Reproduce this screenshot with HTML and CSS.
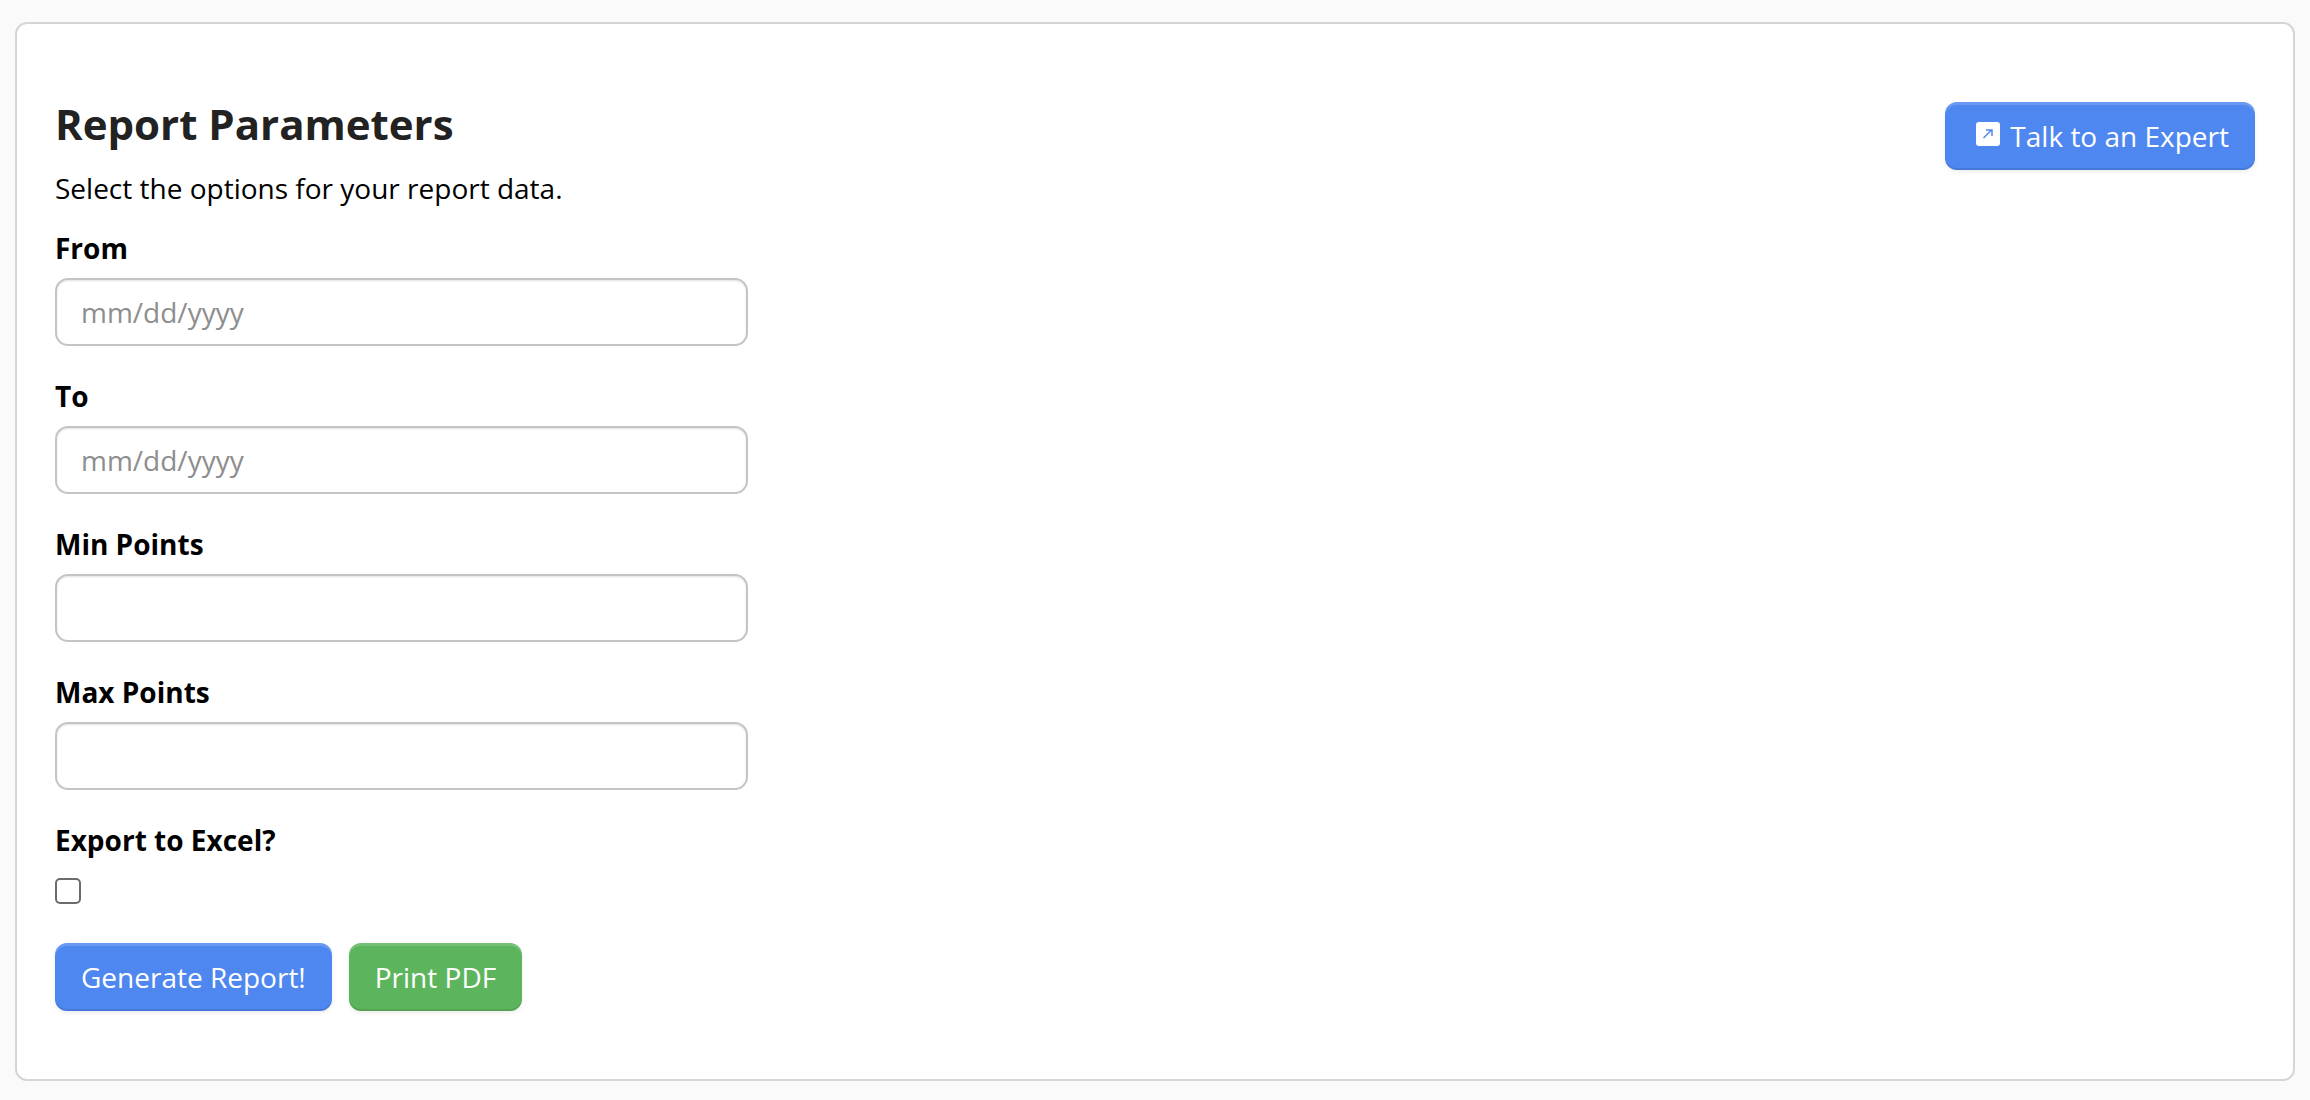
FILE: index.html
```html
<!DOCTYPE html>
<html lang="en">
<head>
  <meta charset="UTF-8">
  <title>Report Parameters</title>
  <link rel="stylesheet" href="styles.css">
</head>
<body>
  <div class="card">
    <div class="card-header">
      <div>
        <h2>Report Parameters</h2>
        <p class="hint">Select the options for your report data.</p>
      </div>
      <a class="btn btn-blue" href="#">
        <svg class="expert-icon" viewBox="0 0 24 24" width="24" height="24">
          <rect width="24" height="24" rx="3" fill="#fff"/>
          <path d="M7.5 16L15.5 8M10 8H16V14" fill="none" stroke="#4f87f0" stroke-width="1.5"/>
        </svg>
        Talk to an Expert
      </a>
    </div>
    <form>
      <div class="field">
        <label for="from">From</label>
        <input id="from" type="text" placeholder="mm/dd/yyyy">
      </div>
      <div class="field">
        <label for="to">To</label>
        <input id="to" type="text" placeholder="mm/dd/yyyy">
      </div>
      <div class="field">
        <label for="minPoints">Min Points</label>
        <input id="minPoints" type="text">
      </div>
      <div class="field">
        <label for="maxPoints">Max Points</label>
        <input id="maxPoints" type="text">
      </div>
      <div class="field">
        <label for="excel">Export to Excel?</label>
        <input id="excel" class="check" type="checkbox">
      </div>
      <div class="actions">
        <button class="btn btn-blue" type="button">Generate Report!</button>
        <button class="btn btn-green" type="button">Print PDF</button>
      </div>
    </form>
  </div>
</body>
</html>
```
FILE: styles.css
```css
body {
  margin: 0;
  padding: 22px 15px 20px 15px;
  font-family: 'Open Sans', sans-serif;
  font-size: 28px;
  background-color: #fafafa;
  color: #000;
}
.card {
  height: 1059px;
  box-sizing: border-box;
  padding: 72px 38px 0;
  background-color: #fff;
  border: 2px solid #d5d5d5;
  border-radius: 12px;
}
.card-header {
  display: flex;
  justify-content: space-between;
  align-items: flex-start;
}
h2 {
  margin: 0;
  font-size: 42px;
  line-height: 56px;
  font-weight: 700;
  color: #222;
}
.hint {
  margin: 18px 0 24px;
  line-height: 36px;
}
.field {
  margin-bottom: 32px;
}
label {
  display: block;
  font-weight: 700;
  line-height: 36px;
  margin-bottom: 12px;
}
input[type="text"] {
  display: block;
  box-sizing: border-box;
  width: 693px;
  height: 68px;
  padding: 0 24px;
  font: inherit;
  background-color: #fff;
  border: 2px solid #c4c4c4;
  border-radius: 13px;
  box-shadow: inset 0 1px 2px rgba(0,0,0,0.12);
}
input::placeholder {
  color: #8e8e8e;
}
.check {
  display: block;
  width: 26px;
  height: 26px;
  margin: 20px 0 39px;
  appearance: none;
  background-color: #fff;
  border: 2px solid #6b6b6b;
  border-radius: 5px;
}
.actions {
  display: flex;
  gap: 17px;
}
.btn {
  display: flex;
  align-items: center;
  height: 68px;
  box-sizing: border-box;
  padding: 0 26px;
  font: inherit;
  color: #fff;
  text-decoration: none;
  border: none;
  border-radius: 12px;
  cursor: pointer;
  box-shadow: inset 0 3px 0 rgba(255,255,255,0.15), inset 0 -2px 0 rgba(0,0,0,0.1), 0 2px 4px rgba(0,0,0,0.08);
}
.btn-blue {
  background-color: #4f87f0;
}
.btn-green {
  background-color: #5cb55c;
}
.expert-icon {
  margin-right: 10px;
  margin-top: -4px;
}
.card-header .btn {
  margin-top: 6px;
  padding-left: 31px;
}
```
